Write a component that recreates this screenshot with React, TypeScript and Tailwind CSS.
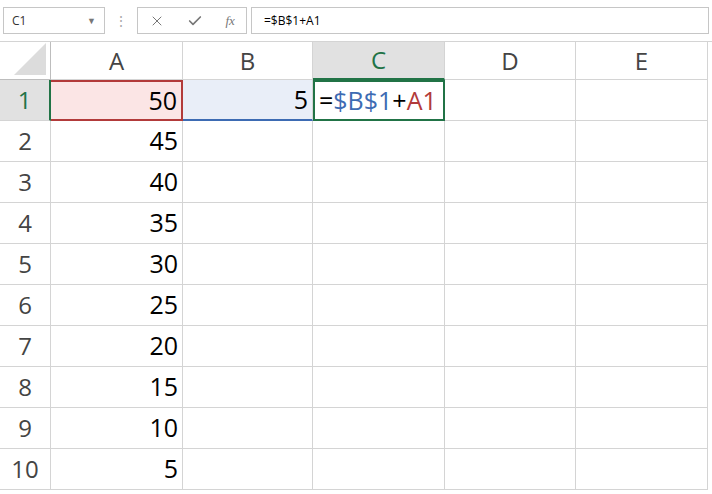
import { X, Check } from 'lucide-react'

const cols = ['A', 'B', 'C', 'D', 'E']
const widths = ['w-[132px]', 'w-[130px]', 'w-[132px]', 'w-[131px]', 'w-[132px]']
const values = [50, 45, 40, 35, 30, 25, 20, 15, 10, 5]

function Cell({ row, col }: { row: number; col: number }) {
  const w = widths[col]
  const base = `${w} h-[41px] shrink-0 border-r border-b border-[#d4d4d4] flex items-center justify-end px-1 text-[25px] text-black`
  if (row === 0 && col === 0)
    return <div className={`${w} h-[41px] shrink-0 relative bg-[#fbe5e5] border-2 border-l-0 border-[#b23a3a] flex items-center justify-end pr-1 text-[25px]`}>50</div>
  if (row === 0 && col === 1)
    return <div className={`${w} h-[41px] shrink-0 bg-[#e9eef8] border-b-2 border-b-[#3d6bb3] border-r border-[#d4d4d4] flex items-center justify-end pr-1 text-[25px]`}>5</div>
  if (row === 0 && col === 2)
    return (
      <div className={`${w} h-[41px] shrink-0 border-2 border-[#217346] flex items-center px-1 text-[25px]`}>
        <span className="text-black">=</span>
        <span className="text-[#3d6bb3]">$B$1</span>
        <span className="text-black">+</span>
        <span className="text-[#b23a3a]">A1</span>
      </div>
    )
  return <div className={base}>{col === 0 ? values[row] : ''}</div>
}

export default function App() {
  return (
    <div className="w-[712px] h-[494px] overflow-hidden bg-white" style={{ fontFamily: '"Open Sans", "Noto Sans", sans-serif' }}>
      <div className="h-[42px] flex items-center px-[3px] border-b border-[#d4d4d4] bg-white">
        <div className="w-[102px] h-[27px] border border-[#c6c6c6] flex items-center justify-between px-2 text-[12px] text-[#333]">
          <span>C1</span>
          <span className="text-[9px] text-[#777]">▼</span>
        </div>
        <div className="w-[32px] flex justify-center text-[#aaa] text-[14px] leading-none">⋮</div>
        <div className="w-[110px] h-[27px] border border-[#c6c6c6] flex items-center justify-around text-[#777]">
          <X size={16} strokeWidth={1.5} />
          <Check size={16} strokeWidth={2.5} />
          <span className="italic text-[13px]" style={{ fontFamily: '"Liberation Serif", serif' }}>fx</span>
        </div>
        <div className="ml-1 flex-1 h-[27px] border border-[#c6c6c6] flex items-center px-3 text-[12px] text-black">=$B$1+A1</div>
      </div>
      <div className="flex">
        <div className="w-[51px] h-[38px] shrink-0 border-r border-b border-[#bdbdbd] relative bg-white">
          <div className="absolute right-1 bottom-1 w-0 h-0 border-l-[32px] border-l-transparent border-b-[32px] border-b-[#dcdcdc]" />
        </div>
        {cols.map((c, i) => (
          <div key={c} className={`${widths[i]} h-[38px] shrink-0 border-r border-b border-[#d4d4d4] flex items-center justify-center text-[24px] ${i === 2 ? 'bg-[#e1e1e1] text-[#217346] border-b-2 border-b-[#217346]' : 'text-[#444]'}`}>{c}</div>
        ))}
      </div>
      {values.map((_, r) => (
        <div key={r} className="flex">
          <div className={`w-[51px] h-[41px] shrink-0 border-r border-b border-[#d4d4d4] flex items-center justify-center text-[24px] ${r === 0 ? 'bg-[#e1e1e1] text-[#217346] border-r-2 border-r-[#217346]' : 'text-[#444]'}`}>{r + 1}</div>
          {cols.map((c, i) => <Cell key={c} row={r} col={i} />)}
        </div>
      ))}
    </div>
  )
}
